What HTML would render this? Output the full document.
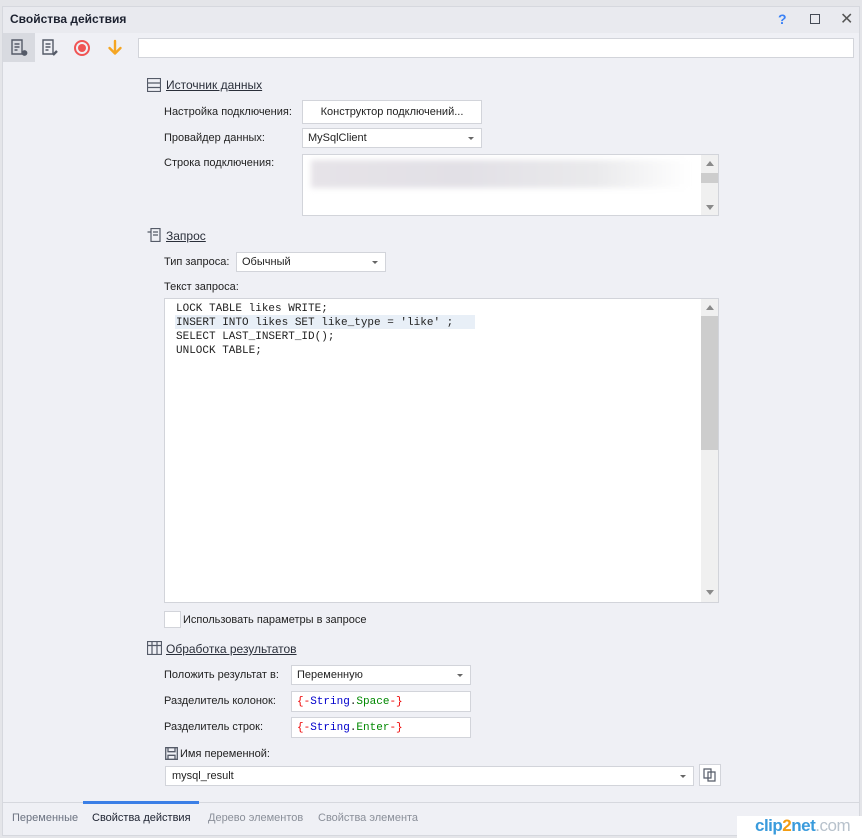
<!DOCTYPE html>
<html><head><meta charset="utf-8"><style>
*{box-sizing:border-box;margin:0;padding:0}
body{width:862px;height:838px;background:#e4e5e9;font-family:"Liberation Sans",sans-serif;font-size:11px;color:#222;position:relative;overflow:hidden}
.a{position:absolute}
.win{left:2px;top:6px;width:858px;height:830px;background:#eff0f5;border:1px solid #d6d8de}
.title{left:3px;top:7px;width:856px;height:26px;background:#e9eaef;}
.inp{position:absolute;background:#fff;border:1px solid #d2d4da}
.lbl{position:absolute;font-size:11px;color:#222;white-space:nowrap}
.hdr{position:absolute;font-size:12px;color:#2a2f3a;text-decoration:underline;white-space:nowrap}
.dd{position:absolute;right:7px;top:50%;margin-top:-1px;border-left:3px solid transparent;border-right:3px solid transparent;border-top:3px solid #666}
.mono{font-family:"Liberation Mono",monospace;font-size:11px}
.sb{position:absolute;right:0;top:0;bottom:0;width:17px;background:#f0f0f0}
.up{position:absolute;left:5px;border-left:4px solid transparent;border-right:4px solid transparent;border-bottom:5px solid #8a8a8a}
.dn{position:absolute;left:5px;border-left:4px solid transparent;border-right:4px solid transparent;border-top:5px solid #8a8a8a}
</style></head><body>
<div class="a win"></div>
<div class="a title"></div>
<div class="lbl" style="left:10px;top:12px;font-weight:bold;font-size:12px;color:#1d2230">Свойства действия</div>
<div class="lbl" style="left:778px;top:11px;color:#3b82f6;font-size:14px;font-weight:bold">?</div>
<div class="a" style="left:810px;top:14px;width:10px;height:10px;border:1.5px solid #444a55"></div>
<div class="lbl" style="left:840px;top:9px;font-size:16px;color:#555">✕</div>
<div class="a" style="left:3px;top:33px;width:32px;height:29px;background:#d8dae0"></div>
<svg class="a" style="left:10px;top:38px" width="20" height="20" viewBox="0 0 20 20" fill="none" stroke="#555b68" stroke-width="1.4"><path d="M2 2h10v14H2z M4.5 6h5 M4.5 9h5 M4.5 12h3"/><circle cx="14.5" cy="15" r="2.2" fill="#555b68"/></svg>
<svg class="a" style="left:41px;top:38px" width="20" height="20" viewBox="0 0 20 20" fill="none" stroke="#555b68" stroke-width="1.4"><path d="M2 2h10v14H2z M4.5 6h5 M4.5 9h5 M4.5 12h3"/><path d="M12 17l4-4" stroke-width="2.4"/></svg>
<div class="a" style="left:74px;top:40px;width:16px;height:16px;border-radius:50%;border:2px solid #f05454;"></div>
<div class="a" style="left:78px;top:44px;width:8px;height:8px;border-radius:50%;background:#f05454"></div>
<svg class="a" style="left:106px;top:39px" width="18" height="18" viewBox="0 0 18 18" fill="none" stroke="#f5a623" stroke-width="2.4" stroke-linecap="round" stroke-linejoin="round"><path d="M9 2v12 M3.5 9L9 14.5 14.5 9"/></svg>
<div class="inp" style="left:138px;top:38px;width:716px;height:20px"></div>
<svg class="a" style="left:147px;top:78px" width="14" height="14" viewBox="0 0 14 14" fill="none" stroke="#555b68" stroke-width="1.2"><rect x="0.5" y="0.5" width="13" height="13"/><path d="M0.5 5h13 M0.5 9.5h13"/></svg>
<div class="hdr" style="left:166px;top:78px">Источник данных</div>
<div class="lbl" style="left:164px;top:106px">Настройка подключения:</div>
<div class="inp" style="left:302px;top:100px;width:180px;height:24px;text-align:center;line-height:22px;font-size:11px">Конструктор подключений...</div>
<div class="lbl" style="left:164px;top:132px">Провайдер данных:</div>
<div class="inp" style="left:302px;top:128px;width:180px;height:20px;padding-left:5px;line-height:18px;font-size:11px">MySqlClient<div class="dd"></div></div>
<div class="lbl" style="left:164px;top:157px">Строка подключения:</div>
<div class="inp" style="left:302px;top:154px;width:417px;height:62px"><div class="a" style="left:8px;top:5px;width:380px;height:28px;background:linear-gradient(90deg,#e6e3e8,#e2e0e6 40%,#eaeaec 75%,#fff);filter:blur(3px)"></div><div class="sb"><div class="up" style="top:6px"></div><div class="a" style="left:0;top:18px;width:17px;height:10px;background:#cdcdcd"></div><div class="dn" style="top:50px"></div></div></div>
<svg class="a" style="left:147px;top:228px" width="14" height="14" viewBox="0 0 14 14" fill="none" stroke="#555b68" stroke-width="1.2"><path d="M4 0.5h9v13H4z M0.5 4h3.5v9.5H4 M6 4h5 M6 7h5"/></svg>
<div class="hdr" style="left:166px;top:229px">Запрос</div>
<div class="lbl" style="left:164px;top:256px">Тип запроса:</div>
<div class="inp" style="left:236px;top:252px;width:150px;height:20px;padding-left:5px;line-height:18px;font-size:11px">Обычный<div class="dd"></div></div>
<div class="lbl" style="left:164px;top:281px">Текст запроса:</div>
<div class="inp mono" style="left:164px;top:298px;width:555px;height:305px">
<div class="a" style="left:10px;top:16px;width:300px;height:14px;background:#e8eff7"></div>
<div class="a" style="left:11px;top:3px;line-height:14px;white-space:pre">LOCK TABLE likes WRITE;
INSERT INTO likes SET like_type = 'like' ;
SELECT LAST_INSERT_ID();
UNLOCK TABLE;</div>
<div class="sb"><div class="up" style="top:6px"></div><div class="a" style="left:0;top:17px;width:17px;height:134px;background:#cdcdcd"></div><div class="dn" style="bottom:7px"></div></div></div>
<div class="inp" style="left:164px;top:611px;width:17px;height:17px"></div>
<div class="lbl" style="left:183px;top:614px">Использовать параметры в запросе</div>
<svg class="a" style="left:147px;top:641px" width="15" height="14" viewBox="0 0 15 14" fill="none" stroke="#555b68" stroke-width="1.2"><rect x="0.5" y="0.5" width="14" height="13"/><path d="M0.5 4.5h14 M5 0.5v13 M10 0.5v13"/></svg>
<div class="hdr" style="left:166px;top:642px">Обработка результатов</div>
<div class="lbl" style="left:164px;top:669px">Положить результат в:</div>
<div class="inp" style="left:291px;top:665px;width:180px;height:20px;padding-left:5px;line-height:18px;font-size:11px">Переменную<div class="dd"></div></div>
<div class="lbl" style="left:164px;top:695px">Разделитель колонок:</div>
<div class="inp mono" style="left:291px;top:691px;width:180px;height:21px;padding-left:5px;line-height:20px"><span style="color:#e00">{-</span><span style="color:#00c">String</span>.<span style="color:#080">Space</span><span style="color:#e00">-}</span></div>
<div class="lbl" style="left:164px;top:721px">Разделитель строк:</div>
<div class="inp mono" style="left:291px;top:717px;width:180px;height:21px;padding-left:5px;line-height:20px"><span style="color:#e00">{-</span><span style="color:#00c">String</span>.<span style="color:#080">Enter</span><span style="color:#e00">-}</span></div>
<svg class="a" style="left:165px;top:747px" width="13" height="13" viewBox="0 0 13 13" fill="none" stroke="#555b68" stroke-width="1.3"><path d="M0.7 0.7h11.6v11.6H0.7z M3 0.7v4h7v-4 M3 12.3v-4h7v4"/></svg>
<div class="lbl" style="left:180px;top:748px">Имя переменной:</div>
<div class="inp" style="left:165px;top:766px;width:529px;height:20px;padding-left:6px;line-height:18px;font-size:11px">mysql_result<div class="dd"></div></div>
<div class="inp" style="left:699px;top:764px;width:22px;height:22px"></div>
<svg class="a" style="left:703px;top:768px" width="14" height="14" viewBox="0 0 14 14" fill="none" stroke="#555b68" stroke-width="1.2"><path d="M1 1h7v9H1z M5 4h7v9H5z"/></svg>
<div class="a" style="left:3px;top:802px;width:856px;height:1px;background:#d6d8de"></div>
<div class="a" style="left:83px;top:801px;width:116px;height:3px;background:#3b7fe6"></div>
<div class="lbl" style="left:12px;top:812px;color:#6b7280">Переменные</div>
<div class="lbl" style="left:92px;top:812px;color:#1d2230">Свойства действия</div>
<div class="lbl" style="left:208px;top:812px;color:#8a8f99">Дерево элементов</div>
<div class="lbl" style="left:318px;top:812px;color:#8a8f99">Свойства элемента</div>
<div class="a" style="left:737px;top:816px;width:125px;height:22px;background:#fff"></div>
<div class="lbl" style="left:755px;top:816px;font-size:17px;font-weight:bold;color:#3a9bdc;letter-spacing:-0.5px">clip<span style="color:#f39c12">2</span>net<span style="color:#b8c2cc;font-weight:normal">.com</span></div>
</body></html>
